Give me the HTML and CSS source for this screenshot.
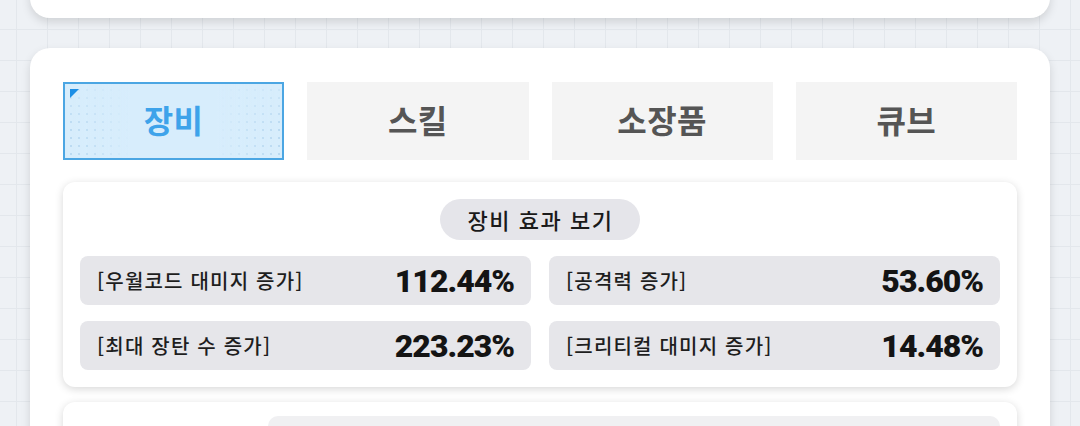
FILE: index.html
```html
<!DOCTYPE html>
<html lang="ko">
<head>
<meta charset="utf-8">
<link rel="stylesheet" href="styles.css">
</head>
<body>
<div class="page">
  <div class="card card-top"></div>
  <div class="card card-main">
    <div class="tabs">
      <div class="tab active"><span class="corner"></span><span class="tab-label">장비</span></div>
      <div class="tab"><span class="tab-label">스킬</span></div>
      <div class="tab"><span class="tab-label">소장품</span></div>
      <div class="tab"><span class="tab-label">큐브</span></div>
    </div>
    <div class="panel">
      <div class="pill-wrap"><div class="pill">장비 효과 보기</div></div>
      <div class="stats">
        <div class="stat"><span class="label">[우월코드 대미지 증가]</span><span class="value">112.44%</span></div>
        <div class="stat"><span class="label">[공격력 증가]</span><span class="value">53.60%</span></div>
        <div class="stat"><span class="label">[최대 장탄 수 증가]</span><span class="value">223.23%</span></div>
        <div class="stat"><span class="label">[크리티컬 대미지 증가]</span><span class="value">14.48%</span></div>
      </div>
    </div>
    <div class="panel panel-next">
      <div class="next-bar"></div>
    </div>
  </div>
</div>
</body>
</html>
```

FILE: styles.css
```css
* { box-sizing: border-box; }
html, body {
  margin: 0;
  padding: 0;
  height: 426px;
  overflow: hidden;
}
body {
  font-family: "Noto Sans CJK KR", "Noto Sans", sans-serif;
  background-color: #eef1f5;
  background-image:
    linear-gradient(to right, #e3e7ec 1px, transparent 1px),
    linear-gradient(to bottom, #e3e7ec 1px, transparent 1px);
  background-size: 31px 31px;
  background-position: 16px 29px;
}
.page {
  display: flex;
  flex-direction: column;
  gap: 30px;
  padding: 0 30px;
}
.card {
  background: #ffffff;
  border-radius: 20px;
  box-shadow: 0 4px 10px rgba(0, 0, 0, 0.13);
}
.card-top {
  height: 48px;
  margin-top: -30px;
}
.card-main {
  height: 420px;
  padding: 34px 33px 0;
  display: flex;
  flex-direction: column;
}
.tabs {
  display: grid;
  grid-template-columns: repeat(4, 1fr);
  column-gap: 23px;
  height: 78px;
}
.tab {
  position: relative;
  background: #f4f4f4;
  display: flex;
  align-items: center;
  justify-content: center;
  padding-bottom: 4px;
}
.tab-label {
  font-size: 32px;
  font-weight: 700;
  color: #555555;
  letter-spacing: 0.5px;
}
.tab.active {
  border: 2px solid #4ba6e3;
  background-color: #d7edfc;
  background-image: radial-gradient(circle, #b9d9f1 1px, transparent 1.3px);
  background-size: 8px 8px;
  background-position: 2px 2px;
}
.tab.active::before {
  content: "";
  position: absolute;
  inset: 0;
  background: linear-gradient(to right, rgba(215,237,252,0) 0%, rgba(215,237,252,0.4) 15%, #d7edfc 30%, #d7edfc 70%, rgba(215,237,252,0.4) 85%, rgba(215,237,252,0) 100%),
              linear-gradient(to bottom, rgba(215,237,252,0.7) 0%, rgba(215,237,252,0) 60%);
}
.tab.active .tab-label {
  position: relative;
  color: #3ea3ea;
}
.corner {
  position: absolute;
  top: 5px;
  left: 5px;
  width: 0;
  height: 0;
  border-top: 9px solid #1d8fe6;
  border-right: 9px solid transparent;
  z-index: 1;
}
.panel {
  margin-top: 22px;
  background: #ffffff;
  border-radius: 12px;
  box-shadow: 0 2px 8px rgba(0, 0, 0, 0.16);
  padding: 17px;
  display: flex;
  flex-direction: column;
  gap: 16px;
  flex-shrink: 0;
}
.pill-wrap {
  display: flex;
  justify-content: center;
}
.pill {
  height: 41px;
  padding: 0 27px 1px 28px;
  border-radius: 21px;
  background: #e5e5ea;
  display: flex;
  align-items: center;
  font-size: 22px;
  font-weight: 500;
  color: #1a1a1a;
  letter-spacing: 1.5px;
}
.stats {
  display: grid;
  grid-template-columns: 1fr 1fr;
  column-gap: 18px;
  row-gap: 16px;
}
.stat {
  height: 49px;
  border-radius: 8px;
  background: #e6e6ea;
  display: flex;
  align-items: center;
  justify-content: space-between;
  padding: 0 17px 0 17px;
}
.label {
  font-size: 20px;
  font-weight: 500;
  color: #1e1e1e;
  letter-spacing: 1.2px;
}
.value {
  font-family: "Roboto", "Liberation Sans", sans-serif;
  font-size: 32px;
  font-weight: 900;
  color: #141414;
  letter-spacing: -1px;
}
.panel-next {
  margin-top: 15px;
  height: 60px;
  padding: 14px 17px 0 205px;
}
.next-bar {
  height: 46px;
  background: #f0f0f2;
  border-radius: 10px;
}
```
